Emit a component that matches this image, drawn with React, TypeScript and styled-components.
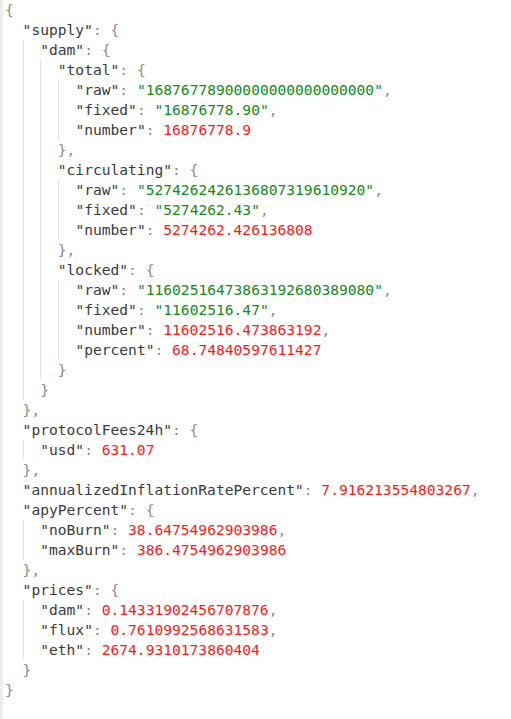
import React from "react";
import styled, { createGlobalStyle } from "styled-components";

type Val =
  | { k: "str"; v: string }
  | { k: "num"; v: string }
  | { k: "obj"; entries: [string, Val][] };

const s = (v: string): Val => ({ k: "str", v });
const n = (v: string): Val => ({ k: "num", v });
const o = (entries: [string, Val][]): Val => ({ k: "obj", entries });

const data: Val = o([
  [
    "supply",
    o([
      [
        "dam",
        o([
          [
            "total",
            o([
              ["raw", s("16876778900000000000000000")],
              ["fixed", s("16876778.90")],
              ["number", n("16876778.9")],
            ]),
          ],
          [
            "circulating",
            o([
              ["raw", s("5274262426136807319610920")],
              ["fixed", s("5274262.43")],
              ["number", n("5274262.426136808")],
            ]),
          ],
          [
            "locked",
            o([
              ["raw", s("11602516473863192680389080")],
              ["fixed", s("11602516.47")],
              ["number", n("11602516.473863192")],
              ["percent", n("68.74840597611427")],
            ]),
          ],
        ]),
      ],
    ]),
  ],
  ["protocolFees24h", o([["usd", n("631.07")]])],
  ["annualizedInflationRatePercent", n("7.916213554803267")],
  [
    "apyPercent",
    o([
      ["noBurn", n("38.64754962903986")],
      ["maxBurn", n("386.4754962903986")],
    ]),
  ],
  [
    "prices",
    o([
      ["dam", n("0.14331902456707876")],
      ["flux", n("0.7610992568631583")],
      ["eth", n("2674.9310173860404")],
    ]),
  ],
]);

const GlobalStyle = createGlobalStyle`
  html, body { margin: 0; padding: 0; background: #ffffff; }
  body { font-family: "DejaVu Sans Mono", monospace; }
`;

const Page = styled.div`
  min-height: 100vh;
  box-sizing: border-box;
  border-left: 3px solid #ececec;
  padding-left: 2px;
  font-family: "DejaVu Sans Mono", "Liberation Mono", monospace;
  font-size: 14.6px;
  line-height: 20px;
`;

const Line = styled.div`
  height: 20px;
  white-space: pre;
`;

const Inner = styled.div<{ $guide: boolean }>`
  border-left: 1px solid ${(p) => (p.$guide ? "#e3e3e3" : "transparent")};
  padding-left: 16.6px;
`;

const Key = styled.span`
  color: #3a3a3a;
`;

const Punct = styled.span`
  color: #8a8a8a;
`;

const Str = styled.span`
  color: #16891a;
`;

const Num = styled.span`
  color: #f21c1c;
`;

function Entry({
  name,
  val,
  depth,
  last,
}: {
  name?: string;
  val: Val;
  depth: number;
  last: boolean;
}) {
  const keyPart =
    name !== undefined ? (
      <>
        <Key>"{name}"</Key>
        <Punct>: </Punct>
      </>
    ) : null;
  const comma = last ? null : <Punct>,</Punct>;
  if (val.k === "obj") {
    return (
      <>
        <Line>
          {keyPart}
          <Punct>{"{"}</Punct>
        </Line>
        <Inner $guide={depth > 0}>
          {val.entries.map(([k, v], i) => (
            <Entry
              key={k}
              name={k}
              val={v}
              depth={depth + 1}
              last={i === val.entries.length - 1}
            />
          ))}
        </Inner>
        <Line>
          <Punct>{"}"}</Punct>
          {comma}
        </Line>
      </>
    );
  }
  return (
    <Line>
      {keyPart}
      {val.k === "str" ? <Str>"{val.v}"</Str> : <Num>{val.v}</Num>}
      {comma}
    </Line>
  );
}

export default function App() {
  return (
    <>
      <GlobalStyle />
      <Page>
        <Entry val={data} depth={0} last />
      </Page>
    </>
  );
}
